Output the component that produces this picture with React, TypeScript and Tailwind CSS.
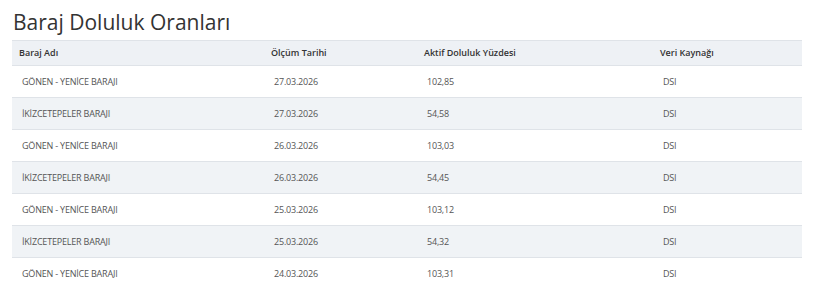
import React from "react";

const rows = [
  ["GÖNEN - YENİCE BARAJI", "27.03.2026", "102,85", "DSI"],
  ["İKİZCETEPELER BARAJI", "27.03.2026", "54,58", "DSI"],
  ["GÖNEN - YENİCE BARAJI", "26.03.2026", "103,03", "DSI"],
  ["İKİZCETEPELER BARAJI", "26.03.2026", "54,45", "DSI"],
  ["GÖNEN - YENİCE BARAJI", "25.03.2026", "103,12", "DSI"],
  ["İKİZCETEPELER BARAJI", "25.03.2026", "54,32", "DSI"],
  ["GÖNEN - YENİCE BARAJI", "24.03.2026", "103,31", "DSI"],
];

export default function App() {
  return (
    <div className="w-[820px] h-[287px] overflow-hidden bg-white px-[12px] pt-[7px]" style={{ fontFamily: '"Open Sans", sans-serif' }}>
      <h1 className="text-[21px] leading-[30px] text-[#333] ml-[1px] mb-[3px]">Baraj Doluluk Oranları</h1>
      <div className="w-[790px]">
        <div className="grid grid-cols-[252px_153px_236px_149px] h-[25px] items-center bg-[#eef1f5] border-t border-[#dfe3e8] text-[9px] font-semibold text-[#333]">
          <div className="pl-[7px]">Baraj Adı</div>
          <div className="pl-[7px]">Ölçüm Tarihi</div>
          <div className="pl-[7px]">Aktif Doluluk Yüzdesi</div>
          <div className="pl-[7px]">Veri Kaynağı</div>
        </div>
        {rows.map((r, i) => (
          <div
            key={i}
            className={
              "grid grid-cols-[252px_153px_236px_149px] h-[32px] items-center border-t border-[#dfe3e8] text-[9px] tracking-[-0.2px] text-[#555] " +
              (i % 2 === 1 ? "bg-[#f0f3f6]" : "bg-white")
            }
          >
            {r.map((c, j) => (
              <div key={j} className="pl-[10px]">{c}</div>
            ))}
          </div>
        ))}
      </div>
    </div>
  );
}
